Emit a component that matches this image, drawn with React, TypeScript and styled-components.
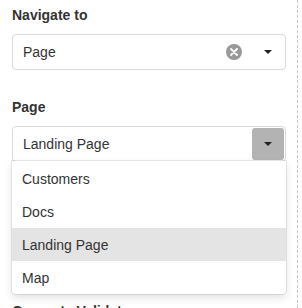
import * as React from 'react';
import styled, { createGlobalStyle } from 'styled-components';

const GlobalStyle = createGlobalStyle`
    html, body {
        margin: 0;
        padding: 0;
        background: #fff;
        font-family: "Liberation Sans", Arial, sans-serif;
        overflow: hidden;
    }
`;

const Panel = styled.div`
    width: 298px;
    height: 308px;
    box-sizing: border-box;
    padding: 7px 11px 0 12px;
    border-right: 1px dashed #c8c8c8;
    overflow: hidden;
`;
const Field = styled.div<{ $gap: number }>`
    position: relative;
    margin-bottom: ${(p) => p.$gap}px;
`;
const Label = styled.div`
    font-size: 14px;
    line-height: 16px;
    font-weight: bold;
    color: #333;
    margin-bottom: 11px;
`;
const Control = styled.div`
    height: 36px;
    box-sizing: border-box;
    border: 1px solid #dadada;
    border-radius: 4px;
    display: flex;
    align-items: center;
    padding: 0 1px 0 10px;
    background: #fff;
`;
const Value = styled.div`
    flex: 1;
    font-size: 14px;
    color: #333;
`;
const ClearButton = styled.div`
    width: 16px;
    height: 16px;
    border-radius: 50%;
    background: #999;
    display: flex;
    align-items: center;
    justify-content: center;
    margin-right: 10px;
`;
const Toggle = styled.div<{ $open?: boolean }>`
    width: 32px;
    height: 32px;
    border-radius: 3px;
    background: ${(p) => (p.$open ? '#b3b3b3' : 'transparent')};
    display: flex;
    align-items: center;
    justify-content: center;
`;
const Caret = styled.div`
    width: 0;
    height: 0;
    border-left: 4px solid transparent;
    border-right: 4px solid transparent;
    border-top: 4px solid #222;
`;
const Menu = styled.div`
    position: absolute;
    left: 0;
    right: 0;
    top: 62px;
    background: #fff;
    border-radius: 0 0 4px 4px;
    box-shadow: 0 0 0 1px rgba(0, 0, 0, 0.08), 0 4px 8px rgba(0, 0, 0, 0.12);
    padding-top: 1px;
    z-index: 2;
`;
const Option = styled.div<{ $active?: boolean }>`
    height: 33px;
    display: flex;
    align-items: center;
    padding-left: 10px;
    font-size: 14px;
    color: #333;
    background: ${(p) => (p.$active ? '#e4e4e4' : 'transparent')};
`;

const pages = ['Customers', 'Docs', 'Landing Page', 'Map'];

export default function App() {
    const selected = 'Landing Page';
    return (
        <>
            <GlobalStyle />
            <Panel>
                <Field $gap={29}>
                    <Label>Navigate to</Label>
                    <Control>
                        <Value>Page</Value>
                        <ClearButton>
                            <svg width="8" height="8" viewBox="0 0 8 8">
                                <path d="M1 1L7 7M7 1L1 7" stroke="#fff" strokeWidth="1.8" strokeLinecap="round" />
                            </svg>
                        </ClearButton>
                        <Toggle>
                            <Caret />
                        </Toggle>
                    </Control>
                </Field>
                <Field $gap={141}>
                    <Label>Page</Label>
                    <Control>
                        <Value>{selected}</Value>
                        <Toggle $open>
                            <Caret />
                        </Toggle>
                    </Control>
                    <Menu>
                        {pages.map((p) => (
                            <Option key={p} $active={p === selected}>
                                {p}
                            </Option>
                        ))}
                    </Menu>
                </Field>
                <Field $gap={0}>
                    <Label>Generate Validators</Label>
                </Field>
            </Panel>
        </>
    );
}
